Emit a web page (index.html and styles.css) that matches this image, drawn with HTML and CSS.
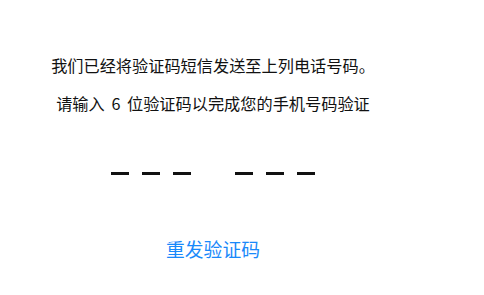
FILE: index.html
```html
<!DOCTYPE html>
<html lang="zh-CN">
<head>
<meta charset="utf-8">
<link rel="stylesheet" href="styles.css">
</head>
<body>
<main class="page">
  <p class="tip">我们已经将验证码短信发送至上列电话号码。</p>
  <p class="tip tip-second">请输入 6 位验证码以完成您的手机号码验证</p>
  <div class="code">
    <div class="group">
      <span class="slot"></span><span class="slot"></span><span class="slot"></span>
    </div>
    <div class="group">
      <span class="slot"></span><span class="slot"></span><span class="slot"></span>
    </div>
  </div>
  <div class="resend">重发验证码</div>
</main>
</body>
</html>
```

FILE: styles.css
```css
html, body {
  margin: 0;
  padding: 0;
  background: #ffffff;
}
body {
  font-family: "Noto Sans CJK SC", "Noto Sans", sans-serif;
  color: #111111;
}
.page {
  width: 426px;
  padding-top: 53px;
  display: flex;
  flex-direction: column;
  align-items: center;
}
.tip {
  margin: 0;
  font-size: 16.2px;
  line-height: 24px;
  white-space: nowrap;
}
.tip-second {
  margin-top: 14px;
  word-spacing: 3px;
}
.code {
  margin-top: 57px;
  display: flex;
  gap: 44px;
}
.group {
  display: flex;
  gap: 13px;
}
.slot {
  display: block;
  width: 18px;
  height: 3px;
  background: #111111;
}
.resend {
  margin-top: 62px;
  font-size: 18.8px;
  line-height: 24px;
  color: #1989fa;
}
```
